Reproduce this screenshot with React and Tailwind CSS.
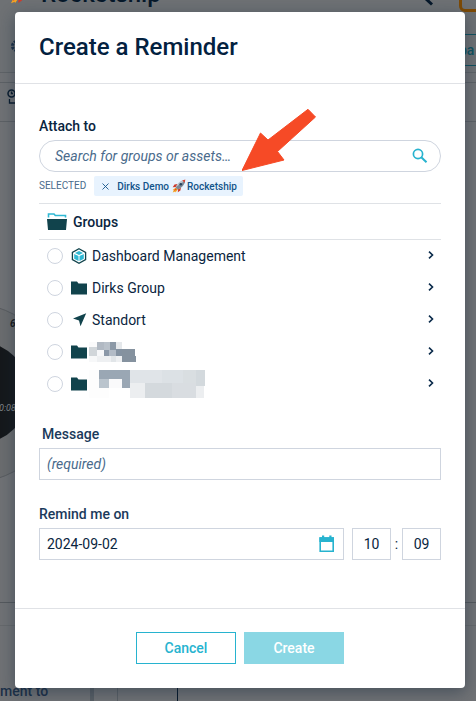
import React from "react";

const FONT = "font-[Roboto,'Liberation_Sans',sans-serif]";

function FolderIcon() {
  return (
    <svg width="16" height="14" viewBox="0 0 16 14" aria-hidden="true">
      <path d="M0 .5h6l1.500 2H16v11H0z" fill="#11434c" />
    </svg>
  );
}

function OpenFolderIcon() {
  return (
    <svg width="20" height="17" viewBox="0 0 20 17" aria-hidden="true">
      <path d="M1.500 4.500V1H7l1.300 1.500H18.500V4.500" fill="none" stroke="#2fb8d3" strokeWidth="1.600" />
      <path d="M0 6h20l-1 11H1z" fill="#11434c" />
    </svg>
  );
}

function CubeIcon() {
  return (
    <svg width="16" height="16" viewBox="0 0 16 16" aria-hidden="true">
      <path d="M8 .8l6.600 3.600v7.200L8 15.200l-6.600-3.600V4.400z" fill="#fff" stroke="#11434c" strokeWidth="1.300" />
      <path d="M8 3l4 2-4 2-4-2z" fill="#2fb8d3" />
      <path d="M3.200 6l4.300 2.100v5L3.200 10.700z" fill="#2fb8d3" />
      <path d="M12.800 6L8.500 8.100v5l4.300-2.400z" fill="#2fb8d3" />
    </svg>
  );
}

function LocationIcon() {
  return (
    <svg width="16" height="16" viewBox="0 0 16 16" aria-hidden="true">
      <path d="M15.200 1.200L9.500 14.200 8 8.500 2 6.500z" fill="#11434c" />
    </svg>
  );
}

function ChevronIcon() {
  return (
    <svg width="6" height="8" viewBox="0 0 6 8" aria-hidden="true">
      <path d="M1 .7L4.500 4 1 7.300" fill="none" stroke="#0a2a4a" strokeWidth="1.600" />
    </svg>
  );
}

function Rocket({ size }) {
  return (
    <svg width={size} height={size} viewBox="0 0 14 14" aria-hidden="true">
      <path d="M4 8.500L.6 11l1.200.2L.7 13.400l2.600-1 .2 1L6 10z" fill="#f6a623" />
      <path d="M3.800 9.200L1.800 12l3-1.800z" fill="#e5432d" />
      <path d="M5.500 5L2.500 5.600.7 8.200l3.500-.2zM9 8.500l-.6 3-2.600 1.800.2-3.500z" fill="#cf3b2d" />
      <path d="M3.600 8.200C5 4.500 8.400 1.300 12.200.9l.9.900c-.4 3.800-3.600 7.200-7.300 8.600z" fill="#b9c3cd" />
      <path d="M3.600 8.200l2.200 2.200c3.700-1.400 6.900-4.800 7.300-8.600z" fill="#7c8996" />
      <path d="M10.200 1.500l2.400 2.300L13.400.6z" fill="#d8412f" />
      <circle cx="8.800" cy="5.200" r="1.300" fill="#24425c" />
    </svg>
  );
}

function SearchIcon() {
  return (
    <svg width="16" height="16" viewBox="0 0 16 16" aria-hidden="true">
      <circle cx="6" cy="6" r="4.600" fill="none" stroke="#27b3cf" strokeWidth="1.700" />
      <path d="M9.300 9.300l5.200 5" stroke="#27b3cf" strokeWidth="2" />
    </svg>
  );
}

function CalendarIcon() {
  return (
    <svg width="16" height="18" viewBox="0 0 16 18" aria-hidden="true">
      <path d="M1.200 3h13v13.200h-13z" fill="none" stroke="#27b3cf" strokeWidth="1.600" />
      <path d="M.4 2.200H15v4.800H.4zM3 .6h2.200v2H3zM10.300.6h2.200v2h-2.200z" fill="#27b3cf" />
    </svg>
  );
}

function Blocks({ width, height, cells }) {
  return (
    <svg width={width} height={height} shapeRendering="crispEdges" aria-hidden="true">
      {cells.map(([x, y, w, h, fill], i) => (
        <rect key={i} x={x} y={y} width={w} height={h} fill={fill} />
      ))}
    </svg>
  );
}

const SHORT_CELLS = [
  [0, 0, 8, 5, "#fafafb"], [8, 0, 7, 8, "#b1b9c3"], [15, 0, 6, 8, "#b9c1ca"],
  [21, 0, 6, 8, "#8b98a6"], [27, 0, 6, 8, "#e5e8eb"], [0, 5, 8, 9, "#d1d6da"],
  [8, 8, 7, 6, "#f6f7f9"], [15, 8, 5, 6, "#8b98a8"], [20, 8, 7, 6, "#b2bbc6"],
  [27, 7, 6, 7, "#8492a1"], [33, 7, 13, 13, "#85929f"], [0, 14, 8, 6, "#f7f8f9"],
  [8, 14, 14, 6, "#eef0f2"], [22, 14, 5, 6, "#e1e5e8"], [27, 14, 6, 6, "#eef0f2"],
  [46, 14, 1, 6, "#85929f"],
];

const LONG_CELLS = [
  [0, 0, 10, 18, "#fdfdfd"], [10, 0, 31, 9, "#9aa7b4"], [10, 9, 10, 9, "#bac4cd"],
  [20, 9, 13, 9, "#fafafb"], [33, 9, 8, 9, "#9aa7b4"], [41, 0, 32, 13, "#e0e4e8"],
  [73, 0, 21, 13, "#dce1e5"], [94, 0, 13, 16, "#d9dee1"], [107, 0, 9, 16, "#d3d9dd"],
  [41, 13, 15, 15, "#eceef0"], [56, 13, 27, 15, "#d4d9dd"], [83, 13, 24, 15, "#d9dde1"],
  [107, 16, 8, 12, "#eceef0"], [0, 18, 20, 10, "#fdfdfd"],
];

const GROUPS = [
  { id: "dashboard", name: "Dashboard Management", icon: <CubeIcon /> },
  { id: "dirks", name: "Dirks Group", icon: <FolderIcon /> },
  { id: "standort", name: "Standort", icon: <LocationIcon /> },
  { id: "hidden-a", icon: <FolderIcon />, redacted: <Blocks width={47} height={20} cells={SHORT_CELLS} /> },
  { id: "hidden-b", icon: <FolderIcon />, redacted: <Blocks width={116} height={28} cells={LONG_CELLS} /> },
];

// The dimmed page that lies under the dialog.
function Backdrop() {
  return (
    <div className="absolute inset-0 overflow-hidden bg-[#707275]" aria-hidden="true">
      <div className="absolute inset-x-0 top-0 h-[73px] border-b border-[#5f6367] bg-[#6e7174]" />
      <div className="absolute inset-x-0 top-[82px] h-[40px] border-y border-[#5d6165]" />
      <div className="absolute -top-4 left-[10px]"><Rocket size={20} /></div>
      <div className="absolute -top-[20px] left-[41px] text-2xl leading-7 font-medium text-[#06182a]">Rocketship</div>
      <svg className="absolute left-[9px] top-[38px]" width="16" height="16" viewBox="0 0 16 16">
        <circle cx="8" cy="8" r="4.500" fill="none" stroke="#1c3048" strokeWidth="3" strokeDasharray="2.500 1" />
      </svg>
      <svg className="absolute left-[7px] top-[89px]" width="16" height="16" viewBox="0 0 16 16" fill="none" stroke="#0a1c2e">
        <circle cx="4.500" cy="4.500" r="3.500" strokeWidth="1.500" />
        <path d="M4.500 2.500v2H6M2.500 10v4H12" strokeWidth="1.300" />
      </svg>
      <svg className="absolute left-[424px] top-0" width="10" height="6" viewBox="0 0 10 6">
        <path d="M1-2l7 6.500" stroke="#06182a" strokeWidth="3" />
      </svg>
      <div className="absolute -top-6 left-[459px] h-9 w-10 rounded-md border-[3px] border-[#7d4a05]" />
      <div className="absolute left-[440px] top-[34px] h-8 w-16 border border-[#10515f] pl-[18px] text-sm leading-[30px] font-medium text-[#10515f]">pa</div>
      <div className="absolute -left-[119px] top-[303px] h-[180px] w-[180px] rounded-full border border-[#595c60] bg-[#6b6d6f]" />
      <div className="absolute -left-[74px] top-[341px] h-[103px] w-[103px] rounded-full bg-[#15181b]" />
      <div className="absolute left-[10px] top-[318px] text-[10px] leading-3 font-bold italic text-[#17191b]">6,0</div>
      <div className="absolute -left-[1px] top-[402px] text-[9px] leading-3 italic text-[#84888c]">0:08</div>
      <div className="absolute left-0 top-[602px] h-px w-full bg-[#55595d]" />
      <div className="absolute left-0 top-[625px] h-px w-full bg-[#66696c]" />
      <div className="absolute left-0 top-[683px] text-sm leading-4 font-medium text-[#1c3048]">ment to</div>
      <div className="absolute bottom-0 left-[90px] h-4 w-1 bg-[#595f65]" />
      <div className="absolute bottom-0 left-[117px] h-4 w-px bg-[#5b6065]" />
      <div className="absolute bottom-0 left-[177px] h-4 w-px bg-[#06182a]" />
    </div>
  );
}

// Pointer over the form that marks the selected asset.
function Arrow() {
  return (
    <svg className="pointer-events-none absolute left-[227px] top-[96px]" width="75" height="64" viewBox="0 0 75 64" aria-hidden="true">
      <path d="M0 62.500L18.500 25l7.500 7L66 1.300 73.500 9 35.500 43.500l6.500 8.500z" fill="#f64a26" stroke="#f64a26" strokeLinejoin="round" />
    </svg>
  );
}

export default function App() {
  const field = "h-8 border border-[#cfd5df] bg-white text-sm text-[#0a2540] outline-none";
  return (
    <div className={`relative min-h-screen overflow-hidden pt-3 pr-[11px] pb-[13px] pl-[15px] ${FONT}`}>
      <Backdrop />
      <form
        role="dialog"
        aria-labelledby="title"
        onSubmit={(e) => e.preventDefault()}
        className="relative rounded-[4px] bg-white text-[#0a2540] shadow-[0_4px_16px_rgba(20,40,60,0.45)]"
      >
        <header className="border-b border-[#e0e2e6] px-6 py-5">
          <h1 id="title" className="text-2xl leading-[31px] font-medium text-[#03213f]">Create a Reminder</h1>
        </header>

        <div className="px-6 pt-8 pb-12">
          <label htmlFor="search" className="block pb-1 text-sm leading-5 font-medium">Attach to</label>
          <div className="flex h-8 items-center rounded-full border border-[#cfd5df] pr-3 pl-[15px]">
            <input
              id="search"
              type="text"
              placeholder="Search for groups or assets…"
              className="min-w-0 flex-1 bg-transparent text-sm italic outline-none placeholder:text-[#4a6b8c]"
            />
            <button type="submit" aria-label="Search"><SearchIcon /></button>
          </div>

          <div className="flex items-center gap-2 pt-1 pb-[7px]">
            <span className="text-[10px] leading-5 text-[#4a6b8c]">SELECTED</span>
            <span className="flex h-5 items-center rounded-[2px] bg-[#e8f3fe] pr-1.5 pl-2 text-[10px] font-medium text-[#12538a]">
              <button type="button" aria-label="Remove" className="mr-2">
                <svg width="7" height="7" viewBox="0 0 7 7" aria-hidden="true">
                  <path d="M.5.5l6 6M6.500.5l-6 6" stroke="#12538a" strokeWidth="0.900" />
                </svg>
              </button>
              Dirks Demo
              <span className="mr-px ml-[3px]"><Rocket size={14} /></span>
              Rocketship
            </span>
          </div>

          <div className="flex h-[37px] items-center gap-1.5 border-y border-[#dfe2e6] px-2">
            <OpenFolderIcon />
            <h2 className="text-sm font-medium">Groups</h2>
          </div>
          <ul>
            {GROUPS.map((g) => (
              <li key={g.id} className="flex h-8 items-center pr-[7px] pl-2">
                <input
                  id={g.id}
                  type="radio"
                  name="group"
                  aria-label={g.name ? undefined : "Group"}
                  className="size-4 appearance-none rounded-full border border-[#cfd5df] checked:border-[5px] checked:border-[#27b3cf]"
                />
                <label htmlFor={g.id} className="flex h-8 flex-1 items-center pl-2 text-sm">
                  {g.icon}
                  {g.redacted ? <span className="ml-0.5">{g.redacted}</span> : <span className="ml-[5px]">{g.name}</span>}
                </label>
                <button type="button" aria-label="Open group" className="pb-0.5"><ChevronIcon /></button>
              </li>
            ))}
          </ul>

          <label htmlFor="message" className="mt-6 block px-[3px] pb-1 text-sm leading-5 font-medium text-[#1b3a5b]">Message</label>
          <input id="message" type="text" placeholder="(required)" className={`${field} w-full px-[7px] placeholder:text-[#4a6b8c] placeholder:italic`} />

          <label htmlFor="date" className="mt-6 block pb-1 text-sm leading-5 font-medium text-[#1b3a5b]">Remind me on</label>
          <div className="flex items-center">
            <div className={`${field} mr-2 flex min-w-0 flex-1 items-center pr-2 pl-[7px]`}>
              <input id="date" type="text" defaultValue="2024-09-02" className="min-w-0 flex-1 outline-none" />
              <button type="button" aria-label="Choose date"><CalendarIcon /></button>
            </div>
            <input type="text" aria-label="Hour" defaultValue="10" className={`${field} w-[39px] text-center`} />
            <span className="w-[11px] text-center text-sm">:</span>
            <input type="text" aria-label="Minute" defaultValue="09" className={`${field} w-[39px] text-center`} />
          </div>
        </div>

        <footer className="flex justify-center gap-2 border-t border-[#e0e2e6] pt-[23px] pb-6">
          <button type="button" className="h-8 w-[100px] border border-[#27b3cf] text-sm font-medium text-[#27b3cf]">Cancel</button>
          <button type="submit" className="h-8 w-[100px] bg-[#8ad7e4] text-sm font-medium text-white">Create</button>
        </footer>
        <Arrow />
      </form>
    </div>
  );
}
